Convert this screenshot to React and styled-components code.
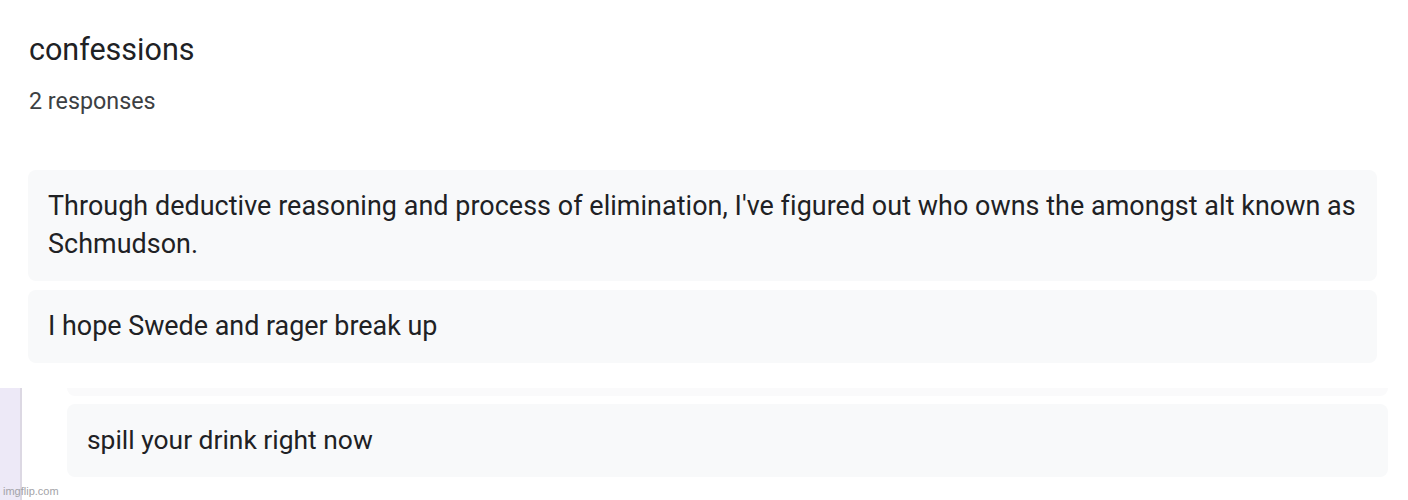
import React from 'react'
import styled, { createGlobalStyle } from 'styled-components'

const Global = createGlobalStyle`
  html, body {
    margin: 0;
    padding: 0;
    background: #ffffff;
  }
`

const Page = styled.div`
  position: relative;
  width: 1408px;
  height: 500px;
  overflow: hidden;
  background: #ffffff;
  font-family: Roboto, "Liberation Sans", Arial, sans-serif;
  color: #202124;
  display: flex;
  flex-direction: column;
`

const Header = styled.div`
  padding: 32px 0 0 29px;
`

const Title = styled.div`
  font-size: 30.5px;
  line-height: 36px;
  color: #202124;
`

const Count = styled.div`
  margin-top: 19px;
  font-size: 23.3px;
  line-height: 28px;
  color: #3c4043;
`

const List = styled.div`
  display: flex;
  flex-direction: column;
  gap: 9px;
  margin: 55px 31px 0 28px;
`

const Card = styled.div`
  background: #f8f9fa;
  border-radius: 8px;
  padding: 17px 20px 18px 20px;
  font-size: ${(p) => p.size || 26.9}px;
  letter-spacing: ${(p) => p.spacing || 0}px;
  line-height: 38px;
  color: #202124;
`

const Lower = styled.div`
  display: flex;
  flex: 1;
  margin-top: 25px;
`

const Rail = styled.div`
  width: 20px;
  background: #ede9f7;
  border-right: 2px solid #dcd8e3;
`

const Column = styled.div`
  flex: 1;
  display: flex;
  flex-direction: column;
  gap: 8px;
  padding: 0 20px 0 45px;
`

const Peek = styled.div`
  height: 8px;
  background: #fafafb;
  border-radius: 0 0 8px 8px;
`

const Watermark = styled.div`
  position: absolute;
  left: 3px;
  bottom: 3px;
  font-family: "Liberation Sans", Arial, sans-serif;
  font-size: 11px;
  line-height: 12px;
  color: #a3a3a8;
`

const responses = [
  { text: "Through deductive reasoning and process of elimination, I've figured out who owns the amongst alt known as Schmudson.", spacing: 0.06 },
  { text: 'I hope Swede and rager break up', spacing: 0 },
]

const App = () => {
  return (
    <Page>
      <Global />
      <Header>
        <Title>confessions</Title>
        <Count>2 responses</Count>
      </Header>
      <List>
        {responses.map((r) => (
          <Card key={r.text} spacing={r.spacing}>{r.text}</Card>
        ))}
      </List>
      <Lower>
        <Rail />
        <Column>
          <Peek />
          <Card size={26.4}>spill your drink right now</Card>
        </Column>
      </Lower>
      <Watermark>imgflip.com</Watermark>
    </Page>
  )
}

export default App
